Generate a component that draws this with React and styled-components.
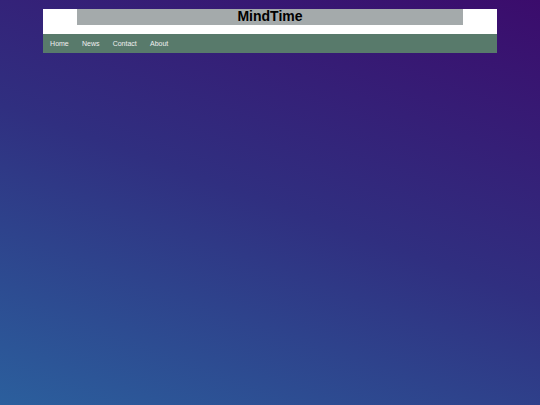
import React from "react";
import styled, { createGlobalStyle } from "styled-components";

const GlobalStyle = createGlobalStyle`
  html, body {
    margin: 0;
    padding: 0;
    height: 100%;
  }
  body {
    font-family: "Liberation Sans", Arial, sans-serif;
    background: linear-gradient(20deg, #2b5f9d 0%, #302f80 50%, #3b0c6c 100%);
    min-height: 405px;
  }
`;

const Page = styled.div`
  padding-top: 9px;
`;

const Container = styled.div`
  width: 454px;
  margin: 0 auto;
`;

const Header = styled.header`
  background: #ffffff;
  height: 25px;
  display: flex;
  justify-content: center;
  align-items: flex-start;
`;

const Title = styled.h1`
  margin: 0;
  width: 386px;
  height: 15.5px;
  background: #a4aaab;
  color: #000;
  font-size: 14px;
  line-height: 15.5px;
  font-weight: bold;
  text-align: center;
`;

const Nav = styled.nav`
  background: #587a6b;
  height: 19px;
  display: flex;
  align-items: center;
  padding-left: 0.5px;
`;

const NavLink = styled.a`
  color: #f0f0f0;
  font-size: 7px;
  padding: 0 6.6px;
  text-decoration: none;
`;

const links = ["Home", "News", "Contact", "About"];

export default function App() {
  return (
    <Page>
      <GlobalStyle />
      <Container>
        <Header>
          <Title>MindTime</Title>
        </Header>
        <Nav>
          {links.map((l) => (
            <NavLink key={l} href="#">{l}</NavLink>
          ))}
        </Nav>
      </Container>
    </Page>
  );
}
